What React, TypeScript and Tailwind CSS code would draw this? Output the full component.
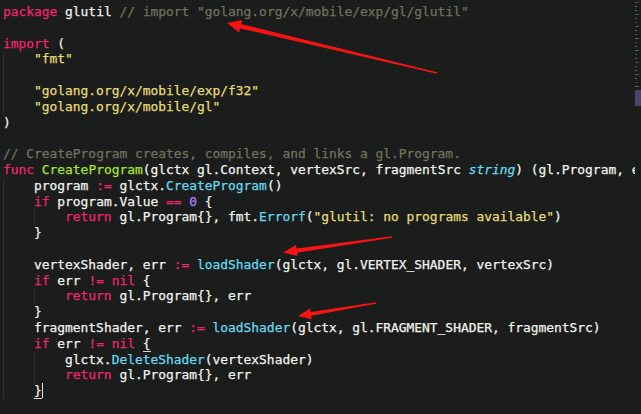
import React from "react";

type Tok = string | [string, string];

const K = "text-[#f2246f]";
const S = "text-[#e6db74]";
const C = "text-[#75715e]";
const F = "text-[#a6e22e]";
const M = "text-[#66d9ef]";
const T = "text-[#66d9ef] italic";
const N = "text-[#ae81ff]";

type Line = { indent: number; toks: Tok[] };

const lines: Line[] = [
  { indent: 0, toks: [["package", K], " glutil ", ['// import "golang.org/x/mobile/exp/gl/glutil"', C]] },
  { indent: 0, toks: [] },
  { indent: 0, toks: [["import", K], " ("] },
  { indent: 1, toks: [['"fmt"', S]] },
  { indent: 1, toks: [] },
  { indent: 1, toks: [['"golang.org/x/mobile/exp/f32"', S]] },
  { indent: 1, toks: [['"golang.org/x/mobile/gl"', S]] },
  { indent: 0, toks: [")"] },
  { indent: 0, toks: [] },
  { indent: 0, toks: [["// CreateProgram creates, compiles, and links a gl.Program.", C]] },
  {
    indent: 0,
    toks: [["func", K], " ", ["CreateProgram", F], "(glctx gl.Context, vertexSrc, fragmentSrc ", ["string", T], ") (gl.Program, error) {"],
  },
  { indent: 1, toks: ["program ", [":=", K], " glctx.", ["CreateProgram", M], "()"] },
  { indent: 1, toks: [["if", K], " program.Value ", ["==", K], " ", ["0", N], " {"] },
  { indent: 2, toks: [["return", K], " gl.Program{}, fmt.", ["Errorf", M], "(", ['"glutil: no programs available"', S], ")"] },
  { indent: 1, toks: ["}"] },
  { indent: 1, toks: [] },
  { indent: 1, toks: ["vertexShader, err ", [":=", K], " ", ["loadShader", M], "(glctx, gl.VERTEX_SHADER, vertexSrc)"] },
  { indent: 1, toks: [["if", K], " err ", ["!=", K], " ", ["nil", K], " {"] },
  { indent: 2, toks: [["return", K], " gl.Program{}, err"] },
  { indent: 1, toks: ["}"] },
  { indent: 1, toks: ["fragmentShader, err ", [":=", K], " ", ["loadShader", M], "(glctx, gl.FRAGMENT_SHADER, fragmentSrc)"] },
  { indent: 1, toks: [["if", K], " err ", ["!=", K], " ", ["nil", K], " ", ["{", "border-b border-[#d8d8d0]"]] },
  { indent: 2, toks: ["glctx.", ["DeleteShader", M], "(vertexShader)"] },
  { indent: 2, toks: [["return", K], " gl.Program{}, err"] },
  { indent: 1, toks: [] },
];

function arrowPoints(tip: [number, number], tail: [number, number], headLen: number, headHalf: number, baseHalf: number, tailHalf: number) {
  const dx = tail[0] - tip[0];
  const dy = tail[1] - tip[1];
  const len = Math.hypot(dx, dy);
  const ux = dx / len;
  const uy = dy / len;
  const nx = -uy;
  const ny = ux;
  const bx = tip[0] + ux * headLen;
  const by = tip[1] + uy * headLen;
  const pts = [
    [tip[0], tip[1]],
    [bx - nx * headHalf, by - ny * headHalf],
    [bx - nx * baseHalf, by - ny * baseHalf],
    [tail[0] - nx * tailHalf, tail[1] - ny * tailHalf],
    [tail[0] + nx * tailHalf, tail[1] + ny * tailHalf],
    [bx + nx * baseHalf, by + ny * baseHalf],
    [bx + nx * headHalf, by + ny * headHalf],
  ];
  return pts.map((p) => p.map((v) => v.toFixed(1)).join(",")).join(" ");
}

function Indent({ level }: { level: number }) {
  return (
    <>
      {Array.from({ length: level }).map((_, i) => (
        <span key={i} className="inline-block w-[4ch] h-[15.8px] align-top border-l border-[#2c2f2e]">
          {"    "}
        </span>
      ))}
    </>
  );
}

function Minimap() {
  const rows = [
    "bg-[#6a3848]", "bg-[#5a5a50]", "bg-[#6a6440]", "bg-[#4a5a60]", "bg-[#5a5a50]", "bg-[#6a3848]",
    "bg-[#5a5a50]", "bg-[#6a6440]", "bg-[#4a5a60]", "bg-[#5a5a50]", "bg-[#6a3848]", "bg-[#5a5a50]",
    "bg-[#6a6440]", "bg-[#4a5a60]", "bg-[#5a5a50]", "bg-[#6a3848]", "bg-[#5a5a50]", "bg-[#6a6440]",
    "bg-[#4a5a60]", "bg-[#5a5a50]", "bg-[#6a3848]", "bg-[#5a5a50]",
  ];
  return (
    <div className="w-[6px] shrink-0 flex flex-col pt-[2px]">
      {rows.map((c, i) => (
        <div key={i} className="h-[4px] flex items-start">
          <div className={`h-px ${i % 3 === 0 ? "w-[4px]" : "w-[2px]"} ${c}`} />
        </div>
      ))}
      <div className="h-[16px] w-[6px] bg-[#4a4468]" />
    </div>
  );
}

export default function App() {
  return (
    <div className="relative w-[641px] h-[414px] overflow-hidden bg-[#1b1d1c] flex">
      <div
        className="flex-1 overflow-hidden pt-[4px] pl-[3px] text-[12.9px] leading-[15.8px] text-[#f2f2ec] whitespace-pre [-webkit-text-stroke:0.25px]"
        style={{ fontFamily: '"DejaVu Sans Mono", "Liberation Mono", monospace' }}
      >
        {lines.map((ln, i) => (
          <div key={i} className="h-[15.8px]">
            <Indent level={ln.indent} />
            {ln.toks.map((t, j) =>
              typeof t === "string" ? (
                <span key={j}>{t}</span>
              ) : (
                <span key={j} className={t[1]}>
                  {t[0]}
                </span>
              )
            )}
            {i === lines.length - 1 && (
              <>
                <span className="border-b border-[#d8d8d0]">{"}"}</span>
                <span className="inline-block w-px h-[15px] align-top bg-[#e8e8e0]" />
              </>
            )}
          </div>
        ))}
      </div>
      <Minimap />
      <svg className="absolute inset-0 pointer-events-none" width="641" height="414" viewBox="0 0 641 414">
        <polygon points={arrowPoints([227, 23], [437, 73], 14, 6.5, 2.2, 0.8)} fill="#f41414" />
        <polygon points={arrowPoints([283, 252.5], [392, 237], 14, 5.5, 2.2, 0.8)} fill="#f41414" />
        <polygon points={arrowPoints([298, 316], [376, 303], 13, 5.5, 2, 0.8)} fill="#f41414" />
      </svg>
    </div>
  );
}
